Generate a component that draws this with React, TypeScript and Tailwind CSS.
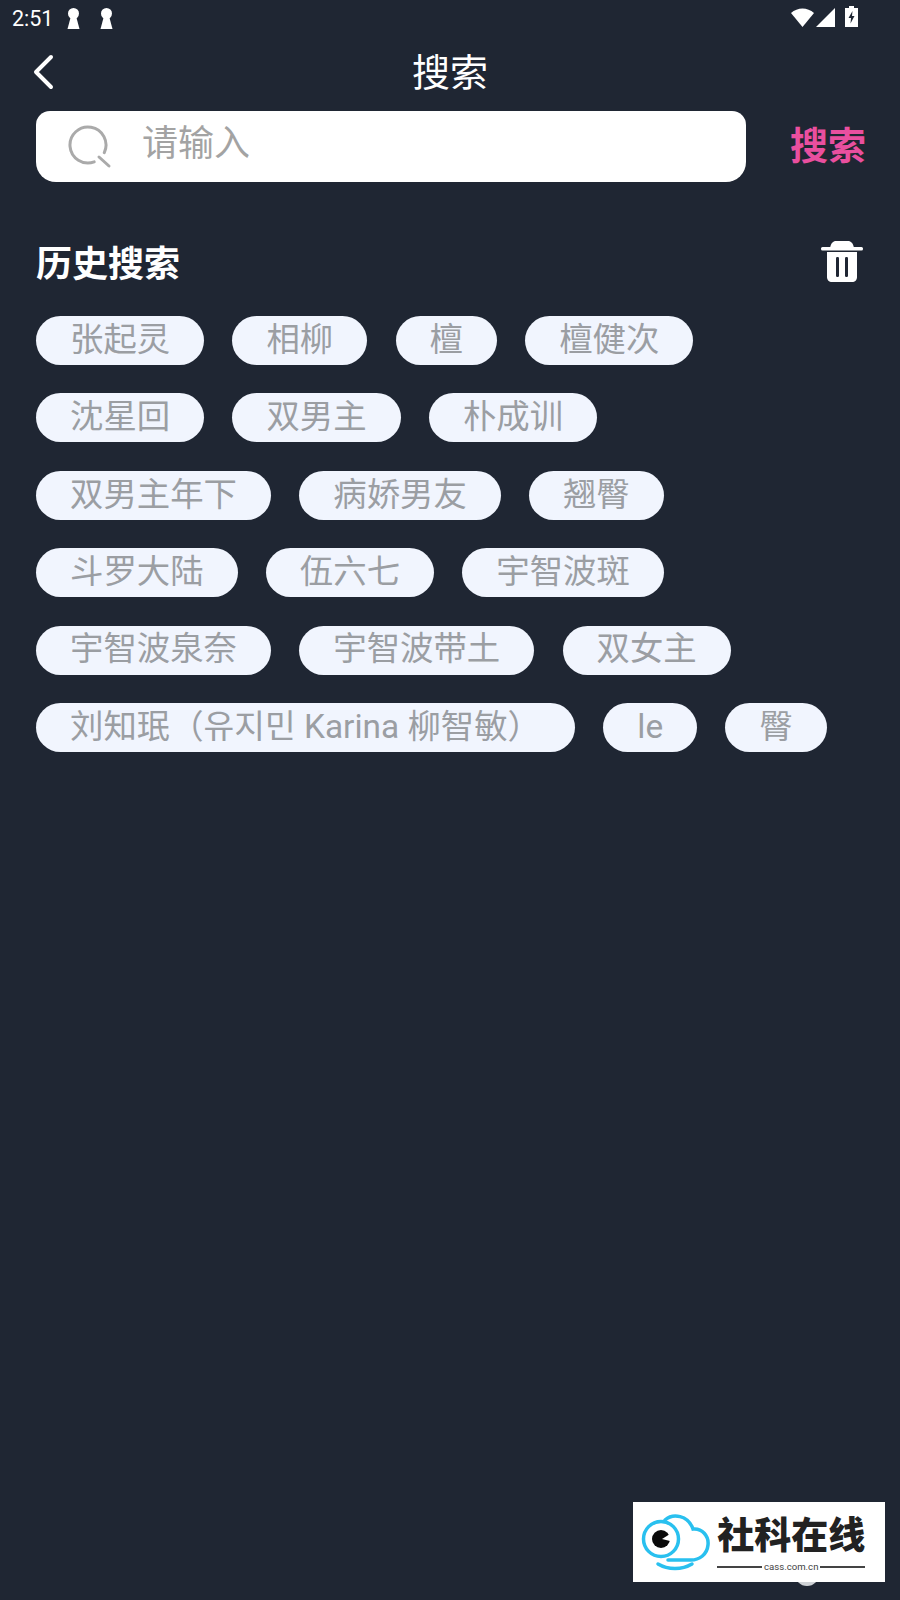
const rows = [
  ["张起灵", "相柳", "檀", "檀健次"],
  ["沈星回", "双男主", "朴成训"],
  ["双男主年下", "病娇男友", "翘臀"],
  ["斗罗大陆", "伍六七", "宇智波斑"],
  ["宇智波泉奈", "宇智波带土", "双女主"],
  ["刘知珉（유지민 Karina 柳智敏）", "le", "臀"],
];

const KeyIcon = () => (
  <svg width="13" height="21" viewBox="0 0 13 21" fill="#fff">
    <circle cx="6.5" cy="5.5" r="5.5" />
    <path d="M4 8h5l3.5 13h-12z" />
  </svg>
);

const BackIcon = () => (
  <svg width="24" height="38" viewBox="0 0 24 38" fill="none" stroke="#fff" strokeWidth="4" strokeLinecap="round" strokeLinejoin="round">
    <path d="M20 4 L5 19 L20 34" />
  </svg>
);

const SearchIcon = () => (
  <svg width="44" height="44" viewBox="0 0 44 44" fill="none" stroke="#aaaaaa" strokeWidth="3" strokeLinecap="round">
    <path d="M36.3 27.6 A18 18 0 1 0 26.2 36.9" />
    <path d="M31 32 L41 41" />
  </svg>
);

const TrashIcon = () => (
  <svg width="42" height="43" viewBox="0 0 42 43" fill="#fff">
    <path d="M9 8 C10 3 12 1 15 1 H27 C30 1 32 3 33 8 Z" />
    <rect x="0" y="7" width="42" height="3.5" rx="1.5" />
    <path d="M6 12 H36 V37 C36 40 34 42 31 42 H11 C8 42 6 40 6 37 Z" />
    <rect x="15" y="17" width="3" height="20" rx="1.2" fill="#1f2633" />
    <rect x="24" y="17" width="3" height="20" rx="1.2" fill="#1f2633" />
  </svg>
);

const StatusRight = () => (
  <div className="flex items-center gap-[2px]">
    <svg width="23" height="19" viewBox="0 0 23 19" fill="#fff">
      <path d="M0 5 C6.5 -1 16.5 -1 23 5 L11.5 19 Z" />
    </svg>
    <svg width="19" height="19" viewBox="0 0 19 19" fill="#fff">
      <path d="M19 0 V19 H0 Z" />
    </svg>
    <svg width="13" height="21" viewBox="0 0 13 21" fill="#fff" className="ml-[8px] -translate-y-[1px]">
      <path d="M4 0 H9 V2 H13 V21 H0 V2 H4 Z" />
      <path d="M7.5 5 L3.5 12 H6 L5.5 17.5 L9.5 10 H7 Z" fill="#1f2633" />
    </svg>
  </div>
);

const Logo = () => (
  <svg width="70" height="64" viewBox="0 0 70 64" fill="none" className="mt-[12px]">
    <path d="M24 6 C32 -1 47 1 52 15 C61 14 68 22 67 31 C66 41 58 46 50 46 L27 46" stroke="#29c0ef" strokeWidth="3.5" strokeLinecap="round" />
    <circle cx="20" cy="25" r="17.5" fill="#fff" stroke="#29c0ef" strokeWidth="3.5" />
    <circle cx="20" cy="25" r="9" fill="#0a0a0a" />
    <path d="M21 25 L29 20 L29 27 Z" fill="#fff" />
    <path d="M17 50 C27 56 41 56 51 50" stroke="#29c0ef" strokeWidth="3.5" strokeLinecap="round" />
  </svg>
);

export default function App() {
  return (
    <div className="relative h-[1600px] w-[900px] overflow-hidden bg-[#1f2633] text-white font-['Roboto','Noto_Sans_CJK_SC',sans-serif]">
      <div className="flex h-[35px] items-center justify-between pl-[12px] pr-[42px]">
        <div className="flex items-center">
          <span className="translate-y-[1px] text-[21.5px] leading-none">2:51</span>
          <span className="ml-[14px] flex gap-[20px] translate-y-[1px]">
            <KeyIcon />
            <KeyIcon />
          </span>
        </div>
        <StatusRight />
      </div>

      <div className="relative flex h-[76px] items-center justify-center">
        <span className="absolute left-[31px] top-[18px]">
          <BackIcon />
        </span>
        <span className="text-[38px] leading-none">搜索</span>
      </div>

      <div className="flex items-start pl-[36px]">
        <div className="flex h-[71px] w-[710px] items-center rounded-t-[14px] rounded-b-[20px] bg-white pl-[32px]">
          <SearchIcon />
          <span className="ml-[30px] -translate-y-[3px] text-[36px] leading-none text-[#a3a3a3]">请输入</span>
        </div>
        <span className="ml-[44px] mt-[16px] text-[38px] font-bold leading-none text-[#e94f9f]">搜索</span>
      </div>

      <div className="mt-[58px] flex items-center justify-between pl-[36px] pr-[37px]">
        <span className="translate-y-[3px] text-[36px] font-bold leading-none">历史搜索</span>
        <TrashIcon />
      </div>

      <div className="mt-[33px] flex flex-col gap-y-[28.4px] pl-[36px]">
        {rows.map((row) => (
          <div key={row[0]} className="flex gap-x-[28.3px]">
            {row.map((label) => (
              <div key={label} className="flex h-[49px] items-center rounded-full bg-[#f1f5fe] px-[34px]">
                <span className="-translate-y-[1px] text-[33.4px] leading-none text-[#9b9ea3]">{label}</span>
              </div>
            ))}
          </div>
        ))}
      </div>

      <div className="absolute left-[795px] top-[1562px] h-[24px] w-[24px] rounded-full bg-[#cfd2d6]"></div>

      <div className="absolute left-[633px] top-[1502px] flex h-[80px] w-[252px] items-start bg-white pl-[8px]">
        <Logo />
        <div className="ml-[6px] mt-[16px] flex flex-col items-center">
          <span className="text-[37px] font-black leading-none text-[#222222]">社科在线</span>
          <div className="mt-[7px] flex items-center gap-[2px]">
            <span className="h-[2px] w-[45px] bg-[#444444]"></span>
            <span className="text-[9.6px] leading-none text-[#444444]">cass.com.cn</span>
            <span className="h-[2px] w-[45px] bg-[#444444]"></span>
          </div>
        </div>
      </div>
    </div>
  );
}
